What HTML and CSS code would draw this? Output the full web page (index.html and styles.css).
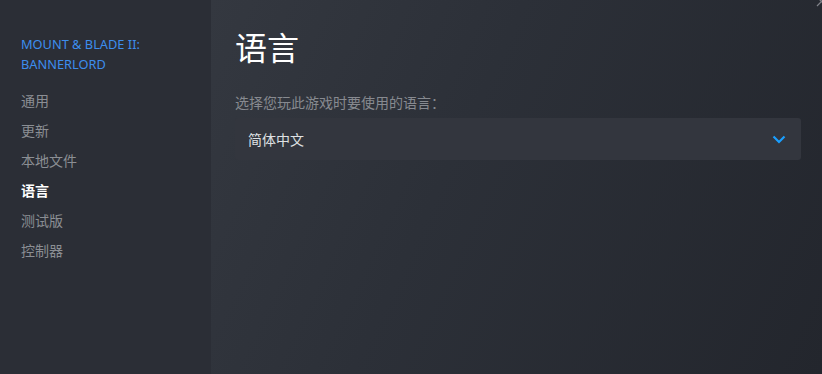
FILE: index.html
```html
<!DOCTYPE html>
<html lang="zh-CN">
<head>
<meta charset="utf-8">
<title>属性 - 语言</title>
<link rel="stylesheet" href="styles.css">
</head>
<body>
<div class="window">
  <nav class="sidebar">
    <div class="game-title">MOUNT &amp; BLADE II: BANNERLORD</div>
    <ul class="menu">
      <li class="menu-item">通用</li>
      <li class="menu-item">更新</li>
      <li class="menu-item">本地文件</li>
      <li class="menu-item active">语言</li>
      <li class="menu-item">测试版</li>
      <li class="menu-item">控制器</li>
    </ul>
  </nav>
  <main class="content">
    <h1 class="page-title">语言</h1>
    <div class="field-label">选择您玩此游戏时要使用的语言：</div>
    <div class="dropdown">
      <span class="dropdown-value">简体中文</span>
      <svg class="chevron" width="14" height="9" viewBox="0 0 14 9"><path d="M1.5 1.5 L7 7 L12.5 1.5" fill="none" stroke="#1a9fff" stroke-width="2.2"/></svg>
    </div>
  </main>
  <svg class="close" width="10" height="10" viewBox="0 0 10 10"><path d="M1 -3 L10 6 M10 -3 L1 6" stroke="#80838a" stroke-width="1.2" fill="none"/></svg>
</div>
</body>
</html>
```

FILE: styles.css
```css
html, body {
  margin: 0;
  padding: 0;
  width: 822px;
  height: 374px;
  overflow: hidden;
  background: #2b2e36;
}
.window {
  display: flex;
  width: 822px;
  height: 374px;
  font-family: "Noto Sans", "Noto Sans CJK SC", sans-serif;
}
.sidebar {
  width: 211px;
  flex: none;
  background: #2b2e36;
  padding: 34px 0 0 21px;
  box-sizing: border-box;
}
.game-title {
  color: #3d8ded;
  font-size: 12.8px;
  line-height: 20px;
  width: 150px;
}
.menu {
  list-style: none;
  margin: 12px 0 0;
  padding: 0;
}
.menu-item {
  font-size: 14px;
  line-height: 30px;
  height: 30px;
  color: #8b8e94;
}
.menu-item.active {
  color: #ffffff;
  font-weight: 700;
}
.content {
  flex: 1;
  padding: 27px 21px 0 24px;
  background: linear-gradient(115deg, #343840 0%, #2c3038 40%, #23262d 100%);
}
.page-title {
  margin: 0;
  font-size: 32px;
  font-weight: 400;
  line-height: 42px;
  color: #ffffff;
}
.field-label {
  margin-top: 24px;
  font-size: 14px;
  line-height: 20px;
  color: #878a90;
}
.dropdown {
  margin-top: 5px;
  height: 42px;
  border-radius: 3px;
  background: #33363e;
  display: flex;
  align-items: center;
  justify-content: space-between;
  padding: 0 15px 0 13px;
}
.dropdown-value {
  font-size: 14px;
  color: #dfe1e3;
}
.chevron {
  display: block;
}
.close {
  position: absolute;
  top: 0;
  right: -4px;
}
```
